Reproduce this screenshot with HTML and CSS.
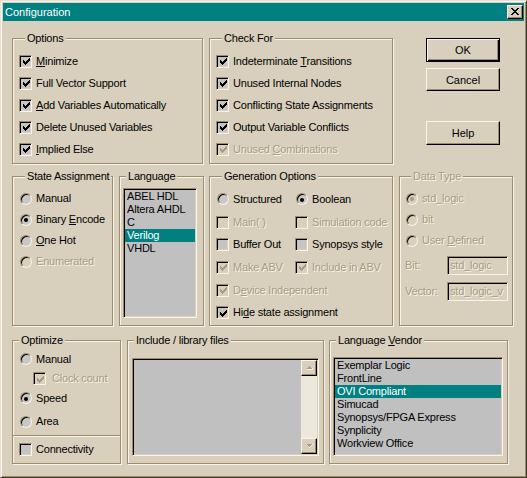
FILE: index.html
```html
<!DOCTYPE html>
<html>
<head>
<meta charset="utf-8">
<link rel="stylesheet" href="styles.css">
</head>
<body>
<div class="window">
  <div class="titlebar">
    <span class="title">Configuration</span>
    <span class="close"><svg width="8" height="7" viewBox="0 0 8 7" shape-rendering="crispEdges"><path d="M0 0h2v1h-2zM6 0h2v1h-2zM1 1h2v1h-2zM5 1h2v1h-2zM2 2h4v1h-4zM3 3h2v1h-2zM2 4h4v1h-4zM1 5h2v1h-2zM5 5h2v1h-2zM0 6h2v1h-2zM6 6h2v1h-2z" fill="#000"/></svg></span>
  </div>
  <div class="body">
    <div class="row row1">
      <fieldset class="group g-options">
        <legend>Options</legend>
        <div class="item h22"><span class="ctl"><span class="cb"><svg class="chk" viewBox="0 0 7 7" shape-rendering="crispEdges"><path d="M6 0h1v1h-1zM5 1h2v1h-2zM0 2h1v1h-1zM4 2h3v1h-3zM0 3h2v1h-2zM3 3h3v1h-3zM0 4h5v1h-5zM1 5h3v1h-3zM2 6h1v1h-1z"/></svg></span></span><span class="lbl"><u>M</u>inimize</span></div>
        <div class="item h22"><span class="ctl"><span class="cb"><svg class="chk" viewBox="0 0 7 7" shape-rendering="crispEdges"><path d="M6 0h1v1h-1zM5 1h2v1h-2zM0 2h1v1h-1zM4 2h3v1h-3zM0 3h2v1h-2zM3 3h3v1h-3zM0 4h5v1h-5zM1 5h3v1h-3zM2 6h1v1h-1z"/></svg></span></span><span class="lbl">Full Vector Support</span></div>
        <div class="item h22"><span class="ctl"><span class="cb"><svg class="chk" viewBox="0 0 7 7" shape-rendering="crispEdges"><path d="M6 0h1v1h-1zM5 1h2v1h-2zM0 2h1v1h-1zM4 2h3v1h-3zM0 3h2v1h-2zM3 3h3v1h-3zM0 4h5v1h-5zM1 5h3v1h-3zM2 6h1v1h-1z"/></svg></span></span><span class="lbl"><u>A</u>dd Variables Automatically</span></div>
        <div class="item h22"><span class="ctl"><span class="cb"><svg class="chk" viewBox="0 0 7 7" shape-rendering="crispEdges"><path d="M6 0h1v1h-1zM5 1h2v1h-2zM0 2h1v1h-1zM4 2h3v1h-3zM0 3h2v1h-2zM3 3h3v1h-3zM0 4h5v1h-5zM1 5h3v1h-3zM2 6h1v1h-1z"/></svg></span></span><span class="lbl">Delete Unused Variables</span></div>
        <div class="item h22"><span class="ctl"><span class="cb"><svg class="chk" viewBox="0 0 7 7" shape-rendering="crispEdges"><path d="M6 0h1v1h-1zM5 1h2v1h-2zM0 2h1v1h-1zM4 2h3v1h-3zM0 3h2v1h-2zM3 3h3v1h-3zM0 4h5v1h-5zM1 5h3v1h-3zM2 6h1v1h-1z"/></svg></span></span><span class="lbl"><u>I</u>mplied Else</span></div>
      </fieldset>
      <fieldset class="group g-check">
        <legend>Check For</legend>
        <div class="item h22"><span class="ctl"><span class="cb"><svg class="chk" viewBox="0 0 7 7" shape-rendering="crispEdges"><path d="M6 0h1v1h-1zM5 1h2v1h-2zM0 2h1v1h-1zM4 2h3v1h-3zM0 3h2v1h-2zM3 3h3v1h-3zM0 4h5v1h-5zM1 5h3v1h-3zM2 6h1v1h-1z"/></svg></span></span><span class="lbl">Indeterminate <u>T</u>ransitions</span></div>
        <div class="item h22"><span class="ctl"><span class="cb"><svg class="chk" viewBox="0 0 7 7" shape-rendering="crispEdges"><path d="M6 0h1v1h-1zM5 1h2v1h-2zM0 2h1v1h-1zM4 2h3v1h-3zM0 3h2v1h-2zM3 3h3v1h-3zM0 4h5v1h-5zM1 5h3v1h-3zM2 6h1v1h-1z"/></svg></span></span><span class="lbl">Unused Internal Nodes</span></div>
        <div class="item h22"><span class="ctl"><span class="cb"><svg class="chk" viewBox="0 0 7 7" shape-rendering="crispEdges"><path d="M6 0h1v1h-1zM5 1h2v1h-2zM0 2h1v1h-1zM4 2h3v1h-3zM0 3h2v1h-2zM3 3h3v1h-3zM0 4h5v1h-5zM1 5h3v1h-3zM2 6h1v1h-1z"/></svg></span></span><span class="lbl">Conflicting State Assignments</span></div>
        <div class="item h22"><span class="ctl"><span class="cb"><svg class="chk" viewBox="0 0 7 7" shape-rendering="crispEdges"><path d="M6 0h1v1h-1zM5 1h2v1h-2zM0 2h1v1h-1zM4 2h3v1h-3zM0 3h2v1h-2zM3 3h3v1h-3zM0 4h5v1h-5zM1 5h3v1h-3zM2 6h1v1h-1z"/></svg></span></span><span class="lbl">Output Variable Conflicts</span></div>
        <div class="item h22 dis"><span class="ctl"><span class="cb"><svg class="chk" viewBox="0 0 7 7" shape-rendering="crispEdges"><path d="M6 0h1v1h-1zM5 1h2v1h-2zM0 2h1v1h-1zM4 2h3v1h-3zM0 3h2v1h-2zM3 3h3v1h-3zM0 4h5v1h-5zM1 5h3v1h-3zM2 6h1v1h-1z"/></svg></span></span><span class="lbl">Unused <u>C</u>ombinations</span></div>
      </fieldset>
      <div class="buttons">
        <div class="btn default b-ok">OK</div>
        <div class="btn b-cancel">Cancel</div>
        <div class="btn b-help">Help</div>
      </div>
    </div>

    <div class="row row2">
      <fieldset class="group g-state">
        <legend>State Assignment</legend>
        <div class="item h21"><span class="ctl"><span class="rb"></span></span><span class="lbl">Manual</span></div>
        <div class="item h21"><span class="ctl"><span class="rb on"></span></span><span class="lbl">Binary <u>E</u>ncode</span></div>
        <div class="item h21"><span class="ctl"><span class="rb"></span></span><span class="lbl"><u>O</u>ne Hot</span></div>
        <div class="item h21 dis"><span class="ctl"><span class="rb"></span></span><span class="lbl">Enumerated</span></div>
      </fieldset>
      <fieldset class="group g-lang">
        <legend>Language</legend>
        <div class="list l-lang">
          <div class="li">ABEL HDL</div>
          <div class="li">Altera AHDL</div>
          <div class="li">C</div>
          <div class="li sel">Verilog</div>
          <div class="li">VHDL</div>
        </div>
      </fieldset>
      <fieldset class="group g-gen">
        <legend>Generation Options</legend>
        <div class="grow">
          <div class="item c1"><span class="ctl"><span class="rb"></span></span><span class="lbl">Structured</span></div>
          <div class="item"><span class="ctl"><span class="rb on"></span></span><span class="lbl">Boolean</span></div>
        </div>
        <div class="grow dis">
          <div class="item c1"><span class="ctl"><span class="cb"></span></span><span class="lbl">Main( )</span></div>
          <div class="item"><span class="ctl"><span class="cb"></span></span><span class="lbl">Simulation code</span></div>
        </div>
        <div class="grow">
          <div class="item c1"><span class="ctl"><span class="cb"></span></span><span class="lbl">Buffer Out</span></div>
          <div class="item"><span class="ctl"><span class="cb"></span></span><span class="lbl">Synopsys style</span></div>
        </div>
        <div class="grow dis">
          <div class="item c1"><span class="ctl"><span class="cb"><svg class="chk" viewBox="0 0 7 7" shape-rendering="crispEdges"><path d="M6 0h1v1h-1zM5 1h2v1h-2zM0 2h1v1h-1zM4 2h3v1h-3zM0 3h2v1h-2zM3 3h3v1h-3zM0 4h5v1h-5zM1 5h3v1h-3zM2 6h1v1h-1z"/></svg></span></span><span class="lbl">Make ABV</span></div>
          <div class="item"><span class="ctl"><span class="cb"><svg class="chk" viewBox="0 0 7 7" shape-rendering="crispEdges"><path d="M6 0h1v1h-1zM5 1h2v1h-2zM0 2h1v1h-1zM4 2h3v1h-3zM0 3h2v1h-2zM3 3h3v1h-3zM0 4h5v1h-5zM1 5h3v1h-3zM2 6h1v1h-1z"/></svg></span></span><span class="lbl">Include in ABV</span></div>
        </div>
        <div class="grow dis">
          <div class="item"><span class="ctl"><span class="cb"><svg class="chk" viewBox="0 0 7 7" shape-rendering="crispEdges"><path d="M6 0h1v1h-1zM5 1h2v1h-2zM0 2h1v1h-1zM4 2h3v1h-3zM0 3h2v1h-2zM3 3h3v1h-3zM0 4h5v1h-5zM1 5h3v1h-3zM2 6h1v1h-1z"/></svg></span></span><span class="lbl">D<u>e</u>vice Independent</span></div>
        </div>
        <div class="grow">
          <div class="item"><span class="ctl"><span class="cb"><svg class="chk" viewBox="0 0 7 7" shape-rendering="crispEdges"><path d="M6 0h1v1h-1zM5 1h2v1h-2zM0 2h1v1h-1zM4 2h3v1h-3zM0 3h2v1h-2zM3 3h3v1h-3zM0 4h5v1h-5zM1 5h3v1h-3zM2 6h1v1h-1z"/></svg></span></span><span class="lbl">Hi<u>d</u>e state assignment</span></div>
        </div>
      </fieldset>
      <fieldset class="group g-data dis">
        <legend>Data Type</legend>
        <div class="item h21"><span class="ctl"><span class="rb on"></span></span><span class="lbl">std_logic</span></div>
        <div class="item h21"><span class="ctl"><span class="rb"></span></span><span class="lbl">bit</span></div>
        <div class="item h21"><span class="ctl"><span class="rb"></span></span><span class="lbl">User <u>D</u>efined</span></div>
        <div class="field f-bit"><span class="flbl">Bit:</span><span class="edit">std_logic</span></div>
        <div class="field f-vec"><span class="flbl">Vector:</span><span class="edit">std_logic_v</span></div>
      </fieldset>
    </div>

    <div class="row row3">
      <fieldset class="group g-opt">
        <legend>Optimize</legend>
        <div class="item o-man"><span class="ctl"><span class="rb"></span></span><span class="lbl">Manual</span></div>
        <div class="item o-clk dis"><span class="ctl"><span class="cb"><svg class="chk" viewBox="0 0 7 7" shape-rendering="crispEdges"><path d="M6 0h1v1h-1zM5 1h2v1h-2zM0 2h1v1h-1zM4 2h3v1h-3zM0 3h2v1h-2zM3 3h3v1h-3zM0 4h5v1h-5zM1 5h3v1h-3zM2 6h1v1h-1z"/></svg></span></span><span class="lbl">Clock count</span></div>
        <div class="item o-spd"><span class="ctl"><span class="rb on"></span></span><span class="lbl">Speed</span></div>
        <div class="item o-area"><span class="ctl"><span class="rb"></span></span><span class="lbl">Area</span></div>
        <div class="sep"></div>
        <div class="item o-con"><span class="ctl"><span class="cb"></span></span><span class="lbl">Connectivity</span></div>
      </fieldset>
      <fieldset class="group g-inc">
        <legend>Include / library files</legend>
        <div class="list l-inc">
          <div class="vscroll">
            <div class="sbtn"><svg width="7" height="4" viewBox="0 0 7 4" shape-rendering="crispEdges"><path d="M3 0h1v1h-1zM2 1h3v1h-3zM1 2h5v1h-5z" fill="#a89c80"/><path d="M6 2h1v1h-1zM1 3h6v1h-6z" fill="#f8f4ec"/></svg></div>
            <div class="track"></div>
            <div class="sbtn"><svg width="7" height="4" viewBox="0 0 7 4" shape-rendering="crispEdges"><path d="M1 0h5v1h-5zM2 1h3v1h-3zM3 2h1v1h-1z" fill="#a89c80"/><path d="M6 0h1v1h-1zM5 1h1v1h-1zM4 2h1v1h-1zM3 3h1v1h-1z" fill="#f8f4ec"/></svg></div>
          </div>
        </div>
      </fieldset>
      <fieldset class="group g-vend">
        <legend>Language <u>V</u>endor</legend>
        <div class="list l-vend">
          <div class="li">Exemplar Logic</div>
          <div class="li">FrontLine</div>
          <div class="li sel">OVI Compliant</div>
          <div class="li">Simucad</div>
          <div class="li">Synopsys/FPGA Express</div>
          <div class="li">Synplicity</div>
          <div class="li">Workview Office</div>
        </div>
      </fieldset>
    </div>
  </div>
</div>
</body>
</html>
```

FILE: styles.css
```css
html, body {
  margin: 0;
  padding: 0;
  background: #d8d0bc;
}
body {
  font-family: "Liberation Sans", Arial, sans-serif;
  font-size: 11px;
  letter-spacing: -0.2px;
  color: #000;
}
.window {
  width: 527px;
  height: 478px;
  box-sizing: border-box;
  background: #d8d0bc;
  border: 1px solid;
  border-color: #e8e2d2 #403828 #403828 #e8e2d2;
  box-shadow: inset 1px 1px 0 #f8f4ec, inset -1px -1px 0 #9c8c6c;
}
.titlebar {
  margin: 2px 2px 0 2px;
  height: 18px;
  background: #008080;
  display: flex;
  justify-content: space-between;
  align-items: flex-start;
}
.title {
  color: #fff;
  padding-left: 2px;
  line-height: 18px;
  letter-spacing: 0;
}
.close {
  margin: 2px 1px 0 0;
  width: 16px;
  height: 14px;
  box-sizing: border-box;
  background: #d8d0bc;
  border: 1px solid;
  border-color: #f8f4ec #000 #000 #f8f4ec;
  box-shadow: inset -1px -1px 0 #9c8c6c;
  display: flex;
  align-items: center;
  justify-content: center;
  padding-bottom: 1px;
}
.close svg { display: block; }

.body {
  padding-left: 11px;
}
.row {
  display: flex;
  align-items: flex-start;
}
.row1 { margin-top: 11px; }
.row2 { margin-top: 6px; }
.row3 { margin-top: 8px; }

.group {
  margin: 0;
  padding: 0;
  min-width: 0;
  box-sizing: border-box;
  border: 1px solid #9c8c6c;
  box-shadow: inset 1px 1px 0 #f8f4ec, 1px 1px 0 #f8f4ec;
}
.group > legend {
  margin-left: 6px;
  padding: 0 2px;
  line-height: 12px;
  background: #d8d0bc;
}
.g-options { width: 191px; height: 132px; margin-right: 6px; padding-top: 6px; padding-left: 6px; }
.g-check { width: 184px; height: 132px; margin-right: 33px; padding-top: 6px; padding-left: 6px; }
.g-state { width: 101px; height: 156px; margin-right: 6px; padding-top: 6px; padding-left: 6px; }
.g-lang { width: 85px; height: 156px; margin-right: 5px; }
.g-gen { width: 184px; height: 156px; margin-right: 6px; padding-top: 6px; padding-left: 6px; }
.g-data { width: 114px; height: 156px; padding-top: 6px; padding-left: 5px; }
.g-opt { width: 109px; height: 130px; margin-right: 6px; }
.g-inc { width: 197px; height: 130px; margin-right: 5px; }
.g-vend { width: 179px; height: 130px; }

.item {
  display: flex;
  align-items: center;
  white-space: nowrap;
}
.h22 { height: 22px; }
.h21 { height: 21px; }
.ctl {
  width: 13px;
  height: 13px;
  flex-shrink: 0;
  display: flex;
  align-items: center;
  justify-content: center;
  margin-right: 4px;
}
.lbl { line-height: 13px; }
u { text-decoration: underline; text-underline-offset: 1px; }

.cb {
  width: 13px;
  height: 13px;
  box-sizing: border-box;
  border: 1px solid;
  border-color: #9c8c6c #f8f4ec #f8f4ec #9c8c6c;
  box-shadow: inset 1px 1px 0 #000, inset -1px -1px 0 #d8d0bc;
  background: #c4c4c4;
  display: flex;
  align-items: center;
  justify-content: center;
}
.chk {
  width: 7px;
  height: 7px;
  display: block;
  fill: #000;
  margin: 1px 0 0 1px;
}
.rb {
  width: 12px;
  height: 12px;
  box-sizing: border-box;
  border-radius: 50%;
  border: 1px solid;
  border-color: #9c8c6c #f8f4ec #f8f4ec #9c8c6c;
  box-shadow: inset 1px 1px 0 #000;
  background: #c8c8c8;
  display: flex;
  align-items: center;
  justify-content: center;
}
.rb.on::after {
  content: "";
  width: 4px;
  height: 4px;
  border-radius: 50%;
  background: #000;
  margin: 1px 0 0 1px;
}

.dis .lbl, .dis .flbl, .dis > legend, .dis .edit {
  color: #a89c80;
  text-shadow: 1px 1px 0 #f8f4ec;
}
.dis .cb, .dis .rb { background: #d8d0bc; }
.dis .chk { fill: #a89c80; }
.dis .rb.on::after { background: #a89c80; }

.grow {
  display: flex;
  height: 22.7px;
}
.grow .item { height: 22.7px; }
.grow .c1 { width: 79px; }

.field {
  display: flex;
  align-items: center;
}
.flbl { width: 42px; line-height: 13px; }
.f-bit { margin-top: 5px; }
.f-vec { margin-top: 7px; }
.edit {
  width: 61px;
  height: 19px;
  box-sizing: border-box;
  border: 1px solid;
  border-color: #9c8c6c #f8f4ec #f8f4ec #9c8c6c;
  box-shadow: inset 1px 1px 0 #000, inset -1px -1px 0 #d8d0bc;
  padding-left: 2px;
  line-height: 17px;
  overflow: hidden;
  white-space: nowrap;
}

.btn {
  width: 74px;
  box-sizing: border-box;
  background: #d8d0bc;
  border: 1px solid;
  border-color: #f8f4ec #000 #000 #f8f4ec;
  box-shadow: inset -1px -1px 0 #9c8c6c;
  display: flex;
  align-items: center;
  justify-content: center;
  letter-spacing: 0;
}
.btn.default {
  border-color: #000;
  box-shadow: inset 1px 1px 0 #f8f4ec, inset -1px -1px 0 #000, inset -2px -2px 0 #9c8c6c;
}
.buttons { display: flex; flex-direction: column; }
.b-ok { height: 24px; margin-top: 6px; }
.b-cancel { height: 23px; margin-top: 6px; }
.b-help { height: 24px; margin-top: 30px; }

.list {
  box-sizing: border-box;
  border: 1px solid;
  border-color: #9c8c6c #f8f4ec #f8f4ec #9c8c6c;
  box-shadow: inset 1px 1px 0 #000, inset -1px -1px 0 #d8d0bc;
  background: #c0c0c0;
  padding: 1px;
  white-space: nowrap;
  overflow: hidden;
}
.li {
  height: 13px;
  line-height: 13px;
  padding-left: 2px;
}
.li.sel { background: #008080; color: #fff; }
.l-lang { width: 74px; height: 130px; margin: 6px 0 0 3px; }
.l-inc { width: 187px; height: 98px; margin: 12px 0 0 4px; display: flex; justify-content: flex-end; }
.l-vend { width: 170px; height: 99px; margin: 11px 0 0 3px; }

.vscroll {
  width: 16px;
  height: 100%;
  display: flex;
  flex-direction: column;
  background: #ece8dc;
}
.track { flex: 1; }
.sbtn {
  width: 16px;
  height: 16px;
  box-sizing: border-box;
  background: #d8d0bc;
  border: 1px solid;
  border-color: #f8f4ec #000 #000 #f8f4ec;
  box-shadow: inset -1px -1px 0 #9c8c6c;
  display: flex;
  align-items: center;
  justify-content: center;
}
.sbtn svg { display: block; }

.o-man { height: 20px; margin-top: 3px; padding-left: 6px; }
.o-clk { height: 19px; padding-left: 20px; }
.o-clk .ctl { margin-right: 6px; }
.o-spd { height: 20px; padding-left: 6px; }
.o-area { height: 27px; padding-left: 6px; }
.sep {
  border-top: 1px solid #9c8c6c;
  border-bottom: 1px solid #f8f4ec;
}
.o-con { height: 24px; padding-left: 6px; }
```
